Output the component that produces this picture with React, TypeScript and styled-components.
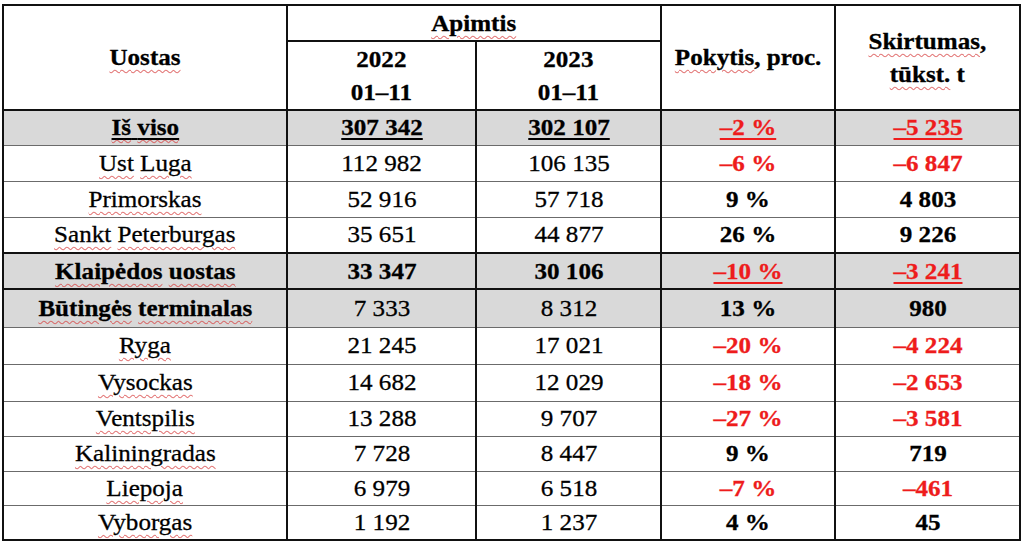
import React from 'react';
import styled, { createGlobalStyle } from 'styled-components';

const GlobalStyle = createGlobalStyle`
  html, body {
    margin: 0;
    padding: 0;
    background: #fff;
  }
  body {
    font-family: "Liberation Serif", "Times New Roman", serif;
    color: #000;
  }
`;

const Page = styled.div`
  width: 1024px;
  height: 544px;
  padding: 4px 0 0 2px;
  box-sizing: border-box;
  overflow: hidden;
`;

const Table = styled.table`
  border-collapse: collapse;
  table-layout: fixed;
  width: 1018px;
  font-size: 24px;
  line-height: 33px;
`;

const Col = styled.col<{ $w: number }>`
  width: ${p => p.$w}px;
`;

const Row = styled.tr<{ $h: number }>`
  height: ${p => p.$h}px;
`;

const HeadCell = styled.th`
  padding: 0;
  text-align: center;
  vertical-align: middle;
  font-weight: 700;
  background: #fff;
  border: 2px solid #111;
`;

const Cell = styled.td<{ $shaded?: boolean; $strongTop?: boolean; $strongBottom?: boolean }>`
  padding: 0;
  text-align: center;
  vertical-align: middle;
  background: ${p => (p.$shaded ? '#d9d9d9' : '#fff')};
  border-left: 2px solid #111;
  border-right: 2px solid #111;
  border-top: ${p => (p.$strongTop ? '2px solid #111' : '1px solid #6b6b6b')};
  border-bottom: ${p => (p.$strongBottom ? '2px solid #111' : '1px solid #6b6b6b')};
`;

// Word's rendering is a little wider and heavier than Liberation Serif at the same height
const Text = styled.span<{ $bold?: boolean; $red?: boolean; $under?: boolean }>`
  display: inline-block;
  transform: scaleX(1.045);
  white-space: nowrap;
  font-weight: ${p => (p.$bold ? 700 : 400)};
  color: ${p => (p.$red ? '#ee1c1c' : '#000')};
  -webkit-text-stroke: 0.3px currentColor;
  text-decoration: ${p => (p.$under ? 'underline solid' : 'none')};
  text-decoration-thickness: 2px;
  text-underline-offset: 3px;
`;

// spell-checker squiggle
const Spell = styled.span`
  text-decoration: underline wavy rgba(214, 60, 60, 0.7);
  text-decoration-thickness: 1px;
  text-underline-offset: 4px;
`;

interface Port {
  name: string;
  v22: string;
  v23: string;
  pct: string;
  diff: string;
  h: number;
  shaded?: boolean;
  strongTop?: boolean;
  nameBold?: boolean;
  nameUnder?: boolean;
  valBold?: boolean;
  valUnder?: boolean;
  diffUnder?: boolean;
}

const ports: Port[] = [
  { name: 'Iš viso', v22: '307 342', v23: '302 107', pct: '–2 %', diff: '–5 235', h: 35, shaded: true, strongTop: true, nameBold: true, nameUnder: true, valBold: true, valUnder: true, diffUnder: true },
  { name: 'Ust Luga', v22: '112 982', v23: '106 135', pct: '–6 %', diff: '–6 847', h: 36 },
  { name: 'Primorskas', v22: '52 916', v23: '57 718', pct: '9 %', diff: '4 803', h: 36 },
  { name: 'Sankt Peterburgas', v22: '35 651', v23: '44 877', pct: '26 %', diff: '9 226', h: 36 },
  { name: 'Klaipėdos uostas', v22: '33 347', v23: '30 106', pct: '–10 %', diff: '–3 241', h: 36, shaded: true, strongTop: true, nameBold: true, valBold: true, diffUnder: true },
  { name: 'Būtingės terminalas', v22: '7 333', v23: '8 312', pct: '13 %', diff: '980', h: 38, shaded: true, strongTop: true, nameBold: true },
  { name: 'Ryga', v22: '21 245', v23: '17 021', pct: '–20 %', diff: '–4 224', h: 37 },
  { name: 'Vysockas', v22: '14 682', v23: '12 029', pct: '–18 %', diff: '–2 653', h: 37 },
  { name: 'Ventspilis', v22: '13 288', v23: '9 707', pct: '–27 %', diff: '–3 581', h: 35 },
  { name: 'Kaliningradas', v22: '7 728', v23: '8 447', pct: '9 %', diff: '719', h: 35 },
  { name: 'Liepoja', v22: '6 979', v23: '6 518', pct: '–7 %', diff: '–461', h: 34 },
  { name: 'Vyborgas', v22: '1 192', v23: '1 237', pct: '4 %', diff: '45', h: 33 },
];

const colWidths = [284, 189, 185, 174, 185];

const PortName: React.FC<{ name: string }> = ({ name }) => (
  <>
    {name.split(' ').map((word, i) => (
      <React.Fragment key={i}>
        {i > 0 && ' '}
        <Spell>{word}</Spell>
      </React.Fragment>
    ))}
  </>
);

const PortRow: React.FC<{ port: Port; last: boolean }> = ({ port, last }) => {
  const neg = port.pct.startsWith('–');
  const cellProps = { $shaded: port.shaded, $strongTop: port.strongTop, $strongBottom: last };

  return (
    <Row $h={port.h}>
      <Cell {...cellProps}>
        <Text $bold={port.nameBold} $under={port.nameUnder}>
          <PortName name={port.name} />
        </Text>
      </Cell>
      <Cell {...cellProps}>
        <Text $bold={port.valBold} $under={port.valUnder}>{port.v22}</Text>
      </Cell>
      <Cell {...cellProps}>
        <Text $bold={port.valBold} $under={port.valUnder}>{port.v23}</Text>
      </Cell>
      <Cell {...cellProps}>
        <Text $bold $red={neg} $under={port.diffUnder}>{port.pct}</Text>
      </Cell>
      <Cell {...cellProps}>
        <Text $bold $red={neg} $under={port.diffUnder}>{port.diff}</Text>
      </Cell>
    </Row>
  );
};

const App: React.FC = () => (
  <>
    <GlobalStyle />
    <Page>
      <Table>
        <colgroup>
          {colWidths.map((w, i) => (
            <Col key={i} $w={w} />
          ))}
        </colgroup>
        <thead>
          <Row $h={36}>
            <HeadCell rowSpan={2}>
              <Text $bold><Spell>Uostas</Spell></Text>
            </HeadCell>
            <HeadCell colSpan={2}>
              <Text $bold><Spell>Apimtis</Spell></Text>
            </HeadCell>
            <HeadCell rowSpan={2}>
              <Text $bold><Spell>Pokytis</Spell>, proc.</Text>
            </HeadCell>
            <HeadCell rowSpan={2}>
              <Text $bold>
                <Spell>Skirtumas</Spell>,<br />
                <Spell>tūkst.</Spell> t
              </Text>
            </HeadCell>
          </Row>
          <Row $h={69}>
            <HeadCell>
              <Text $bold>2022<br />01–11</Text>
            </HeadCell>
            <HeadCell>
              <Text $bold>2023<br />01–11</Text>
            </HeadCell>
          </Row>
        </thead>
        <tbody>
          {ports.map((port, i) => (
            <PortRow key={port.name} port={port} last={i === ports.length - 1} />
          ))}
        </tbody>
      </Table>
    </Page>
  </>
);

export default App;
